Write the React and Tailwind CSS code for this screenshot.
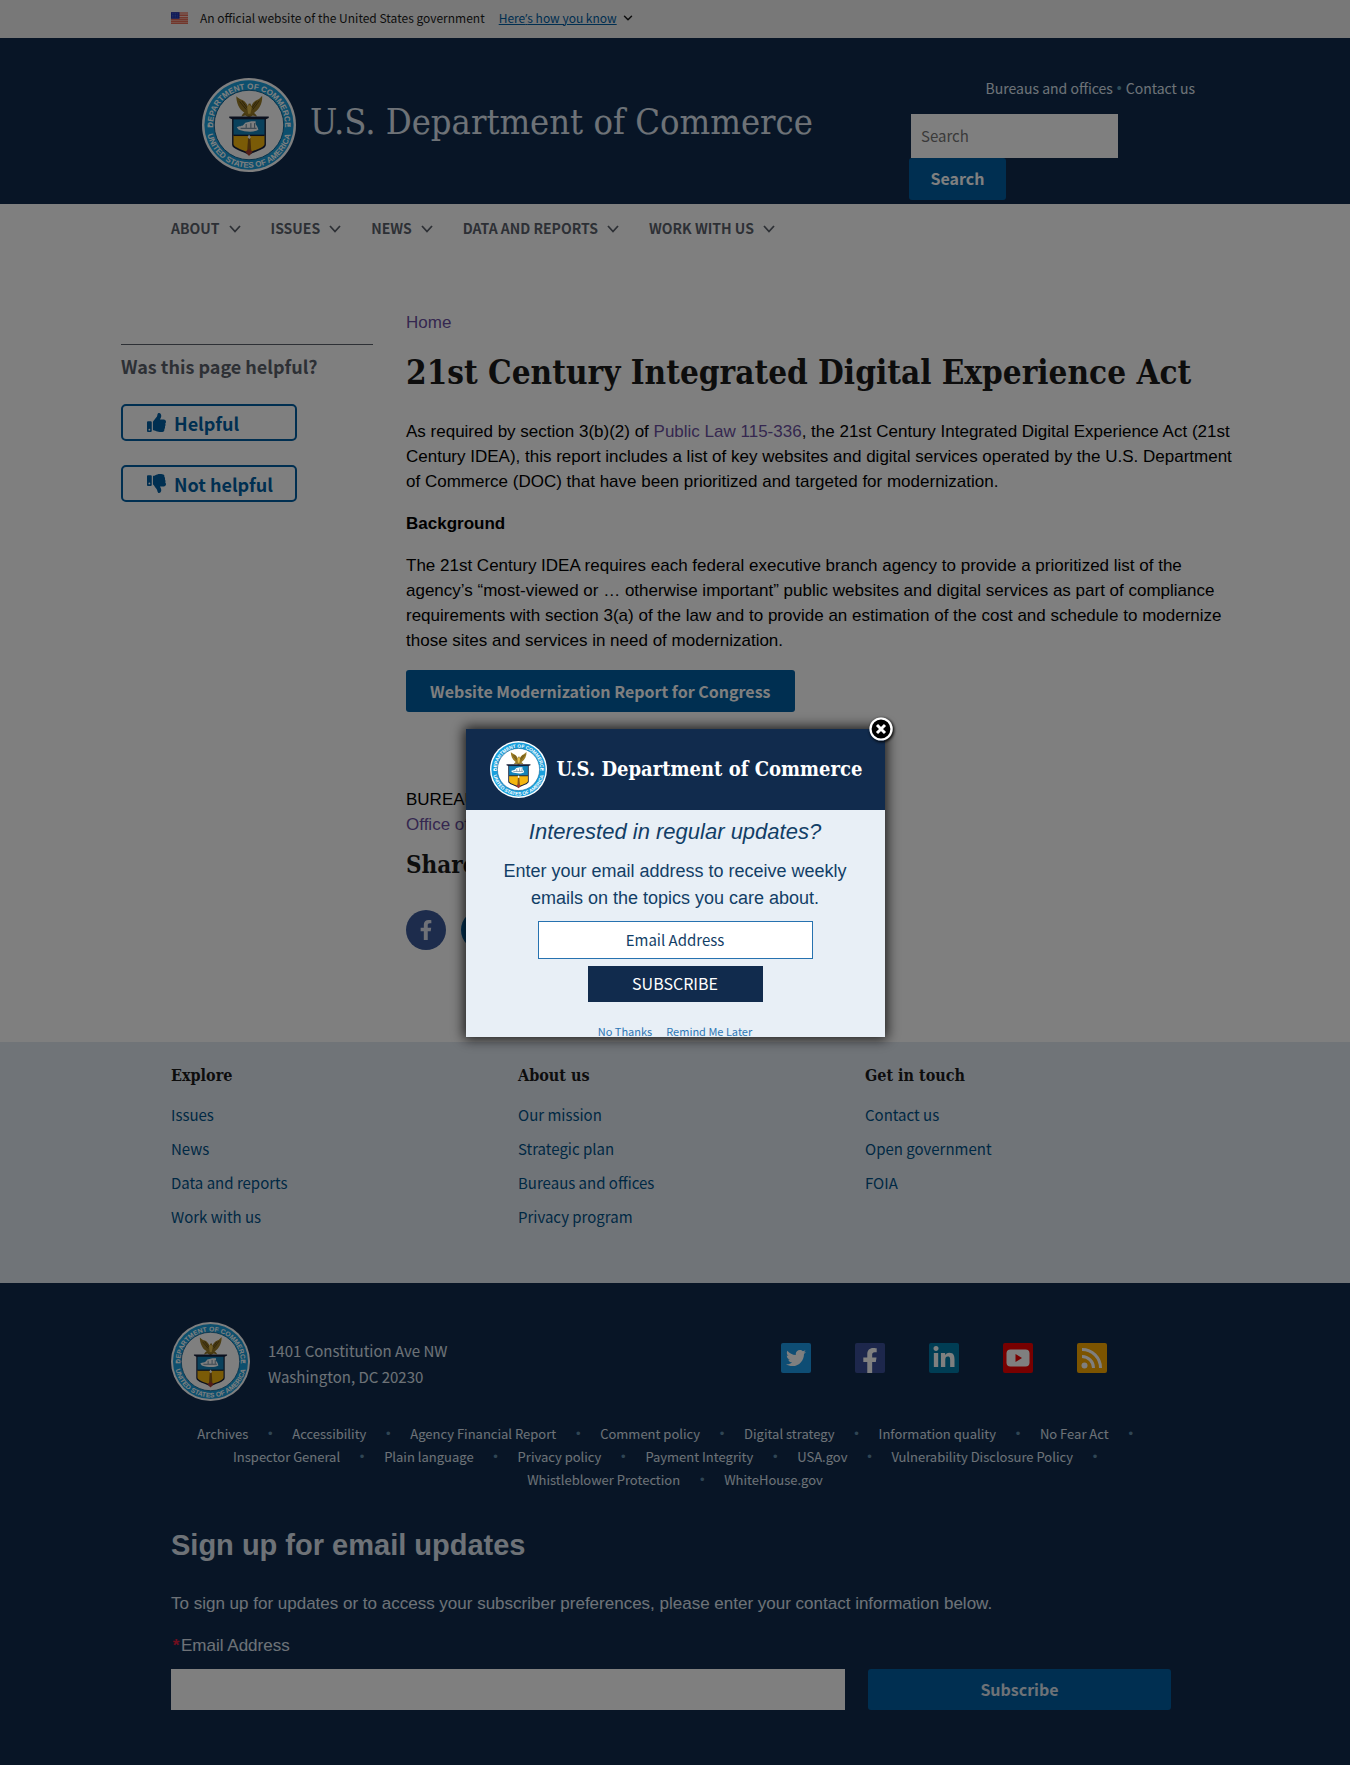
import { useId } from "react";
import { ChevronDown } from "lucide-react";
import { FaThumbsUp, FaThumbsDown, FaFacebookF, FaLinkedinIn, FaTwitter } from "react-icons/fa";

const navItems = ["About", "Issues", "News", "Data and reports", "Work with us"];

const footerColumns = [
  { title: "Explore", links: ["Issues", "News", "Data and reports", "Work with us"] },
  { title: "About us", links: ["Our mission", "Strategic plan", "Bureaus and offices", "Privacy program"] },
  { title: "Get in touch", links: ["Contact us", "Open government", "FOIA"] },
];

const policyRows = [
  ["Archives", "Accessibility", "Agency Financial Report", "Comment policy", "Digital strategy", "Information quality", "No Fear Act"],
  ["Inspector General", "Plain language", "Privacy policy", "Payment Integrity", "USA.gov", "Vulnerability Disclosure Policy"],
  ["Whistleblower Protection", "WhiteHouse.gov"],
];

function Seal({ className }) {
  const id = useId();
  return (
    <svg viewBox="0 0 200 200" className={className} role="img" aria-label="Department of Commerce seal">
      <circle cx="100" cy="100" r="100" fill="#fff" />
      <circle cx="100" cy="100" r="95" fill="#1a9fdc" />
      <circle cx="100" cy="100" r="74" fill="#fff" />
      <circle cx="100" cy="100" r="74" fill="none" stroke="#0f5f8e" strokeWidth="2" />
      <path id={id + "t"} d="M23.500 100 A76.500 76.500 0 0 1 176.500 100" fill="none" />
      <path id={id + "b"} d="M9 100 A91 91 0 0 0 191 100" fill="none" />
      <g fill="#fff" fontFamily="Liberation Sans, sans-serif" fontWeight="700" textAnchor="middle">
        <text fontSize="17">
          <textPath href={"#" + id + "t"} startOffset="50%">DEPARTMENT OF COMMERCE</textPath>
        </text>
        <text fontSize="17">
          <textPath href={"#" + id + "b"} startOffset="50%">UNITED STATES OF AMERICA</textPath>
        </text>
      </g>
      <circle cx="15" cy="101" r="2.500" fill="#fff" />
      <circle cx="185" cy="101" r="2.500" fill="#fff" />
      <path d="M84 82 C86 74 94 72 100 72 C106 72 114 74 117 82 L108 80 L100 84 L92 80 Z" fill="#8f7426" />
      <path d="M73 39 C78 44 82 46 86 47 C92 50 96 56 98 61 L99 55 L103 54 L105 60 C107 54 112 49 117 47 C122 45 125 42 128 38 C129 52 123 66 111 74 L106 79 H95 L89 73 C78 66 73 52 73 39 Z" fill="#9a7c26" />
      <path d="M80 50 L94 67 M85 49 L96 64 M122 48 L108 67 M116 50 L106 64" stroke="#4e3d10" strokeWidth="1.800" />
      <path d="M96 61 L101 57 L106 62 L103 76 H98 Z" fill="#e0bd4e" />
      <path d="M58 82 H142 V85 L136 88 V142 C136 152 112 156 100 164 C88 156 64 152 64 142 V88 L58 85 Z" fill="#17213a" />
      <path d="M67 88 H133 V122 H67 Z" fill="#1482b8" />
      <path d="M67 122 H133 V141 C132 149 110 153 100 160 C90 153 68 149 67 141 Z" fill="#f5b60f" />
      <path d="M67 122 H133" stroke="#17213a" strokeWidth="3" />
      <path d="M74 105 C80 101 84 104 88 100 L92 95 L105 92 H114 V98 L118 104 L120 110 C108 117 92 114 78 110 Z" fill="#fff" />
      <path d="M82 107 H116 M94 98 V106 M104 96 V106 M112 96 V106" stroke="#54748b" strokeWidth="2" />
      <path d="M98 128 H103 L105 157 L100 160 L96 157 Z" fill="#8c5a16" />
      <path d="M92 157 L100 151 L108 157 L100 166 Z" fill="#a63a2d" />
      <path d="M97 126 L100 120 L104 126 L101 130 Z" fill="#fff" />
    </svg>
  );
}

function Flag() {
  return (
    <svg viewBox="0 0 16 11" className="h-3 w-[17px] shrink-0" role="img" aria-label="U.S. flag">
      <rect width="16" height="11" fill="#fff" />
      <path d="M0 .8H16M0 2.800H16M0 4.800H16M0 6.600H16M0 8.400H16M0 10.300H16" stroke="#db3e1f" strokeWidth="1.100" />
      <rect width="8" height="6.200" fill="#1e33b1" />
      <path d="M1 1.500H7M1 3H7M1 4.500H7" stroke="#a8b3ea" strokeWidth=".5" strokeDasharray=".6 .9" />
    </svg>
  );
}

function NavChevron() {
  return (
    <svg viewBox="0 0 12 8" className="mt-0.5 h-2 w-3" fill="none" stroke="currentColor" strokeWidth="1.800">
      <path d="M1 1L6 6.500L11 1" />
    </svg>
  );
}

function RssIcon() {
  return (
    <svg viewBox="0 0 30 30" className="size-[30px]" fill="none" stroke="#fff" strokeWidth="3">
      <circle cx="7.500" cy="22.500" r="3" fill="#fff" stroke="none" />
      <path d="M5 13.500A11.500 11.500 0 0 1 16.500 25" />
      <path d="M5 6.500A18.500 18.500 0 0 1 23.500 25" />
    </svg>
  );
}

function YoutubeIcon() {
  return (
    <svg viewBox="0 0 30 30" className="size-[30px]">
      <rect x="3.500" y="6.500" width="23" height="17" rx="4" fill="#fff" />
      <path d="M12.500 11L19 15L12.500 19Z" fill="#f00000" />
    </svg>
  );
}

function SocialLink({ label, className, children }) {
  return (
    <a href="#" aria-label={label} className={"flex size-[30px] overflow-hidden rounded-xs text-white " + className}>
      {children}
    </a>
  );
}

function Page() {
  return (
    <div className="font-['Noto_Sans_CJK_SC',sans-serif] text-[#1b1b1b]">
      <section aria-label="Official government website" className="bg-[#f0f0f0]">
        <div className="mx-auto flex h-[38px] max-w-[1040px] items-center px-4 pb-0.5 text-[12px] leading-4">
          <Flag />
          <p className="ml-3">An official website of the United States government</p>
          <button type="button" className="ml-3.5 flex items-center gap-1 text-[#005ea2]">
            <span className="underline">
              Here<span className="font-['Open_Sans',sans-serif]">’</span>s how you know
            </span>
            <ChevronDown className="size-3.5 text-[#1b1b1b]" strokeWidth={2.5} />
          </button>
        </div>
      </section>

      <header>
        <div className="bg-[#112b4d] text-white">
          <div className="mx-auto flex h-[166px] max-w-[1040px] items-start justify-between">
            <a href="#" className="mt-10 ml-[47px] flex items-center gap-3.5">
              <Seal className="size-[94px]" />
              <span className="pb-1.5 font-['DejaVu_Serif_Condensed','DejaVu_Serif',serif] text-[36px] leading-[48px] text-[#dce4ef]">
                U.S. Department of Commerce
              </span>
            </a>
            <div className="mt-[39px] w-[286px]">
              <div className="flex justify-end gap-1 text-[14px] leading-[22px] text-[#dce4ef]">
                <a href="#">Bureaus and offices</a>
                <span className="font-['Liberation_Sans',sans-serif] text-[#5b9bb5]">•</span>
                <a href="#">Contact us</a>
              </div>
              <form className="mt-[15px] flex flex-col items-start">
                <input
                  type="search"
                  aria-label="Search"
                  placeholder="Search"
                  className="ml-0.5 h-11 w-[207px] bg-white px-2.5 pb-0.5 text-[15px] placeholder:text-[#757575]"
                />
                <button type="button" className="h-[42px] w-[97px] rounded-[3px] bg-[#005ea2] pb-0.5 text-[16px] font-bold">
                  Search
                </button>
              </form>
            </div>
          </div>
        </div>
        <nav aria-label="Primary" className="mx-auto flex h-[47px] max-w-[1040px] items-center gap-[30px] px-4">
          {navItems.map((item) => (
            <button key={item} type="button" className="flex items-center gap-[9px] text-[14px] leading-5 font-bold text-[#5b616b] uppercase">
              {item}
              <NavChevron />
            </button>
          ))}
        </nav>
      </header>

      <main className="mx-auto flex max-w-[1108px] gap-[33px] pt-[59px]">
        <aside className="w-[252px] shrink-0 pt-[34px]">
          <div className="border-t border-[#5b616b] pt-[7px]">
            <h2 className="text-[18px] leading-7 font-bold text-[#5b616b]">Was this page helpful?</h2>
            <div className="mt-6 flex flex-col gap-6">
              <button type="button" className="flex h-[37px] w-44 items-center gap-2 rounded-[5px] border-2 border-[#005ea2] pl-6 text-[18px] leading-6 font-bold text-[#005ea2]">
                <FaThumbsUp className="size-[19px]" />
                Helpful
              </button>
              <button type="button" className="flex h-[37px] w-44 items-center gap-2 rounded-[5px] border-2 border-[#005ea2] pl-6 text-[18px] leading-6 font-bold text-[#005ea2]">
                <FaThumbsDown className="size-[19px]" />
                Not helpful
              </button>
            </div>
          </div>
        </aside>
        <div className="-mr-3 min-w-0 flex-1 font-['Liberation_Sans',sans-serif] text-[17px] leading-[25px] text-black">
          <a href="#" className="text-[#6b4fa0]">Home</a>
          <h1 className="mt-4 font-['DejaVu_Serif_Condensed','DejaVu_Serif',serif] text-[33px] leading-[44px] font-bold text-[#1b1b1b]">
            21st Century Integrated Digital Experience Act
          </h1>
          <p className="mt-6">
            As required by section 3(b)(2) of <a href="#" className="text-[#6b4fa0]">Public Law 115-336</a>, the 21st Century
            Integrated Digital Experience Act (21st Century IDEA), this report includes a list of key websites and digital
            services operated by the U.S. Department of Commerce (DOC) that have been prioritized and targeted for
            modernization.
          </p>
          <h2 className="mt-[17px] font-bold">Background</h2>
          <p className="mt-[17px]">
            The 21st Century IDEA requires each federal executive branch agency to provide a prioritized list of the
            agency’s “most-viewed or … otherwise important” public websites and digital services as part of compliance
            requirements with section 3(a) of the law and to provide an estimation of the cost and schedule to modernize
            those sites and services in need of modernization.
          </p>
          <a
            href="#"
            className="mt-[17px] inline-flex h-[42px] items-center rounded-[3px] bg-[#005ea2] px-6 font-['Noto_Sans_CJK_SC',sans-serif] text-[16px] font-bold text-white"
          >
            Website Modernization Report for Congress
          </a>
          <div className="mt-[75px]">BUREAUS AND OFFICES</div>
          <a href="#" className="text-[#6b4fa0]">Office of the Secretary</a>
          <h2 className="mt-3 font-['DejaVu_Serif_Condensed','DejaVu_Serif',serif] text-[24px] leading-8 font-bold text-[#1b1b1b]">
            Share this page
          </h2>
          <div className="mt-[29px] flex gap-[15px]">
            <a href="#" aria-label="Share on Facebook" className="flex size-10 items-center justify-center rounded-full bg-[#3b5998] text-[#dfe3ee]">
              <FaFacebookF className="size-5" />
            </a>
            <a href="#" aria-label="Share on LinkedIn" className="flex size-10 items-center justify-center rounded-full bg-[#0067b1] text-white">
              <FaLinkedinIn className="size-5" />
            </a>
          </div>
        </div>
      </main>

      <footer className="mt-[92px]">
        <nav aria-label="Footer" className="bg-[#e1e8f1]">
          <div className="mx-auto flex h-[241px] max-w-[1040px] px-4 pt-[22px]">
            {footerColumns.map((col) => (
              <div key={col.title} className="w-[347px] shrink-0">
                <h3 className="font-['DejaVu_Serif_Condensed','DejaVu_Serif',serif] text-[16px] leading-6 font-bold">{col.title}</h3>
                <ul className="mt-2.5 text-[15px] leading-[34px] text-[#005288]">
                  {col.links.map((link) => (
                    <li key={link}>
                      <a href="#">{link}</a>
                    </li>
                  ))}
                </ul>
              </div>
            ))}
          </div>
        </nav>
        <div className="bg-[#112b4d] pt-[39px] pb-14 text-[#dce4ef]">
          <div className="mx-auto max-w-[1040px] px-4">
            <div className="flex items-center justify-between">
              <div className="flex items-center gap-[18px]">
                <Seal className="size-[79px]" />
                <address className="mt-1 text-[15px] leading-[26px] not-italic">
                  1401 Constitution Ave NW
                  <br />
                  Washington, DC 20230
                </address>
              </div>
              <div className="mr-[72px] flex gap-11 pb-2">
                <SocialLink label="Twitter" className="items-center justify-center bg-[#1d9be9]">
                  <FaTwitter className="size-5" />
                </SocialLink>
                <SocialLink label="Facebook" className="items-end justify-center bg-[#3b4f98]">
                  <FaFacebookF className="h-[25px] w-6" />
                </SocialLink>
                <SocialLink label="LinkedIn" className="items-center justify-center bg-[#007ba8]">
                  <FaLinkedinIn className="size-6" />
                </SocialLink>
                <SocialLink label="YouTube" className="bg-[#f00000]">
                  <YoutubeIcon />
                </SocialLink>
                <SocialLink label="RSS" className="bg-[#f9a800]">
                  <RssIcon />
                </SocialLink>
              </div>
            </div>
            <div className="mt-[21px] text-[13px] leading-[23px]">
              {policyRows.map((row, r) => (
                <ul key={row[0]} className="flex justify-center">
                  {row.map((link, i) => (
                    <li key={link} className="flex">
                      <a href="#">{link}</a>
                      {(r < 2 || i < row.length - 1) && (
                        <span className="w-11 text-center font-['Liberation_Sans',sans-serif] text-[#5f8ba8]">•</span>
                      )}
                    </li>
                  ))}
                </ul>
              ))}
            </div>
            <form className="mt-[34px] mr-2 font-['Liberation_Sans',sans-serif] text-[17px] leading-[25px]">
              <h2 className="text-[29px] leading-[40px] font-bold">Sign up for email updates</h2>
              <p className="mt-[26px]">
                To sign up for updates or to access your subscriber preferences, please enter your contact information below.
              </p>
              <label htmlFor="signup-email" className="mt-[17px] flex">
                <span className="w-2.5 text-center font-bold text-[#e31c3d]">*</span>Email Address
              </label>
              <div className="mt-[11px] flex gap-[23px]">
                <input id="signup-email" type="email" className="h-[41px] min-w-0 flex-1 bg-white px-2 text-black" />
                <button type="button" className="h-[41px] w-[303px] rounded-[3px] bg-[#005ea2] font-['Noto_Sans_CJK_SC',sans-serif] text-[16px] font-bold">
                  Subscribe
                </button>
              </div>
            </form>
          </div>
        </div>
      </footer>
    </div>
  );
}

function UpdatesDialog() {
  return (
    <div className="fixed inset-0 flex items-center justify-center bg-black/50">
      <div role="dialog" aria-label="Email updates" className="relative w-[419px] shadow-[0_0_12px_2px_#000000cc]">
        <div className="h-[308px] overflow-hidden bg-[#e8eff6] text-center font-['Liberation_Sans',sans-serif] text-[#112e51]">
          <div className="flex h-[81px] items-center gap-2.5 bg-[#112b4d] pl-6">
            <Seal className="size-[57px] shrink-0" />
            <span className="font-['DejaVu_Serif_Condensed','DejaVu_Serif',serif] text-[20px] leading-6 font-bold whitespace-nowrap text-white">
              U.S. Department of Commerce
            </span>
          </div>
          <h2 className="mt-1.5 text-[22px] leading-8 text-[#123e66] italic">Interested in regular updates?</h2>
          <p className="mx-6 mt-2.5 text-[18px] leading-[27px] text-[#123e66]">
            Enter your email address to receive weekly emails on the topics you care about.
          </p>
          <form className="flex flex-col items-center font-['Noto_Sans_CJK_SC',sans-serif]">
            <input
              type="email"
              aria-label="Email Address"
              placeholder="Email Address"
              className="mt-[9px] h-[38px] w-[275px] border border-[#2672b0] bg-white text-center text-[15px] placeholder:text-[#123e66]"
            />
            <button type="button" className="mt-[7px] h-9 w-[175px] bg-[#112b4d] pb-0.5 text-[16px] leading-[34px] text-white">
              SUBSCRIBE
            </button>
          </form>
          <div className="mt-[21px] flex justify-center gap-3.5 font-['Noto_Sans_CJK_SC',sans-serif] text-[11px] leading-4 text-[#2e77b5]">
            <button type="button">No Thanks</button>
            <button type="button">Remind Me Later</button>
          </div>
        </div>
        <button type="button" aria-label="Close" className="absolute -top-3 -right-2 rounded-full shadow-[1px_1px_3px_#000]">
          <svg viewBox="0 0 24 24" className="size-6">
            <circle cx="12" cy="12" r="10.500" fill="#000" stroke="#fff" strokeWidth="2.200" />
            <path d="M8 8L16 16M16 8L8 16" stroke="#fff" strokeWidth="3" />
          </svg>
        </button>
      </div>
    </div>
  );
}

export default function App() {
  return (
    <>
      <Page />
      <UpdatesDialog />
    </>
  );
}
